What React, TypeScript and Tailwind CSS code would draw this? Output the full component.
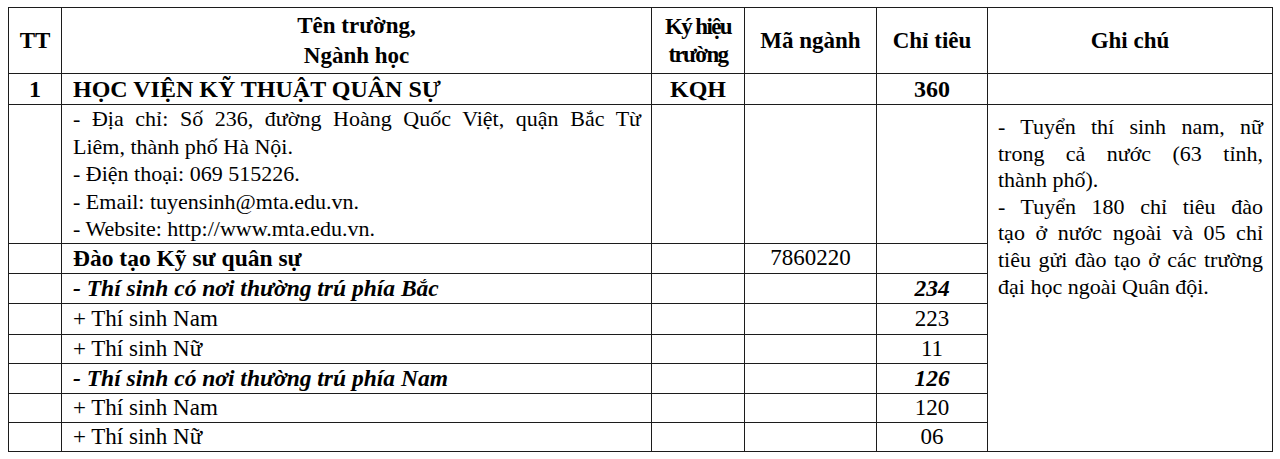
import React from "react"

type Row = {
  name: string
  code?: string
  quota?: string
  style?: "bold" | "boldItalic" | "normal"
  h: string
}

const rows: Row[] = [
  { name: "Đào tạo Kỹ sư quân sự", code: "7860220", style: "bold", h: "h-[30px]" },
  { name: "- Thí sinh có nơi thường trú phía Bắc", quota: "234", style: "boldItalic", h: "h-[30px]" },
  { name: "+ Thí sinh Nam", quota: "223", h: "h-[31px]" },
  { name: "+ Thí sinh Nữ", quota: "11", h: "h-[29px]" },
  { name: "- Thí sinh có nơi thường trú phía Nam", quota: "126", style: "boldItalic", h: "h-[30px]" },
  { name: "+ Thí sinh Nam", quota: "120", h: "h-[29px]" },
  { name: "+ Thí sinh Nữ", quota: "06", h: "h-[28px]" },
]

const cell = "border border-[#1c1c1c] p-0"

function styleFor(style?: Row["style"]) {
  if (style === "bold") return "font-bold text-[23.5px]"
  if (style === "boldItalic") return "font-bold italic text-[23.5px]"
  return "text-[23px]"
}

export default function App() {
  return (
    <div className="min-h-[459px] w-[1280px] bg-white pl-[8px] pt-[7px] font-['Liberation_Serif',serif] text-[22px] leading-[28px] text-black">
      <table className="w-[1264px] table-fixed border-collapse">
        <colgroup>
          <col className="w-[53px]" />
          <col className="w-[590px]" />
          <col className="w-[93px]" />
          <col className="w-[132px]" />
          <col className="w-[111px]" />
          <col className="w-[285px]" />
        </colgroup>
        <thead>
          <tr className="h-[66px] text-[23px] font-bold">
            <th className={`${cell} text-center align-middle`}>TT</th>
            <th className={`${cell} text-center align-middle leading-[30px]`}>
              Tên trường,
              <br />
              Ngành học
            </th>
            <th className={`${cell} text-center align-middle leading-[28px] tracking-[-0.07em]`}>
              Ký hiệu
              <br />
              trường
            </th>
            <th className={`${cell} text-center align-middle`}>Mã ngành</th>
            <th className={`${cell} text-center align-middle`}>Chỉ tiêu</th>
            <th className={`${cell} text-center align-middle`}>Ghi chú</th>
          </tr>
        </thead>
        <tbody>
          <tr className="h-[31px] text-[24px] font-bold">
            <td className={`${cell} text-center`}>1</td>
            <td className={`${cell} pl-[11px]`}>HỌC VIỆN KỸ THUẬT QUÂN SỰ</td>
            <td className={`${cell} text-center`}>KQH</td>
            <td className={cell}></td>
            <td className={`${cell} text-center`}>360</td>
            <td className={cell}></td>
          </tr>
          <tr className="h-[138px]">
            <td className={cell}></td>
            <td className={`${cell} pl-[11px] pr-[10px] align-top leading-[27.5px]`}>
              <div className="text-justify [text-align-last:justify]">
                - Địa chỉ: Số 236, đường Hoàng Quốc Việt, quận Bắc Từ
              </div>
              <div>Liêm, thành phố Hà Nội.</div>
              <div>- Điện thoại: 069 515226.</div>
              <div>- Email: tuyensinh@mta.edu.vn.</div>
              <div>- Website: http://www.mta.edu.vn.</div>
            </td>
            <td className={cell}></td>
            <td className={cell}></td>
            <td className={cell}></td>
            <td
              rowSpan={rows.length + 1}
              className={`${cell} pl-[10px] pr-[9px] pt-[9px] align-top leading-[26.6px]`}
            >
              <div className="whitespace-nowrap [text-align-last:justify]">- Tuyển thí sinh nam, nữ</div>
              <div className="whitespace-nowrap [text-align-last:justify]">trong cả nước (63 tỉnh,</div>
              <div className="whitespace-nowrap">thành phố).</div>
              <div className="whitespace-nowrap [text-align-last:justify]">- Tuyển 180 chỉ tiêu đào</div>
              <div className="whitespace-nowrap [text-align-last:justify]">tạo ở nước ngoài và 05 chỉ</div>
              <div className="whitespace-nowrap [text-align-last:justify]">tiêu gửi đào tạo ở các trường</div>
              <div className="whitespace-nowrap">đại học ngoài Quân đội.</div>
            </td>
          </tr>
          {rows.map((row, i) => (
            <tr key={i} className={row.h}>
              <td className={cell}></td>
              <td className={`${cell} pl-[11px] ${styleFor(row.style)}`}>{row.name}</td>
              <td className={cell}></td>
              <td className={`${cell} text-center text-[23px]`}>{row.code}</td>
              <td className={`${cell} text-center ${styleFor(row.style)}`}>{row.quota}</td>
            </tr>
          ))}
        </tbody>
      </table>
    </div>
  )
}
